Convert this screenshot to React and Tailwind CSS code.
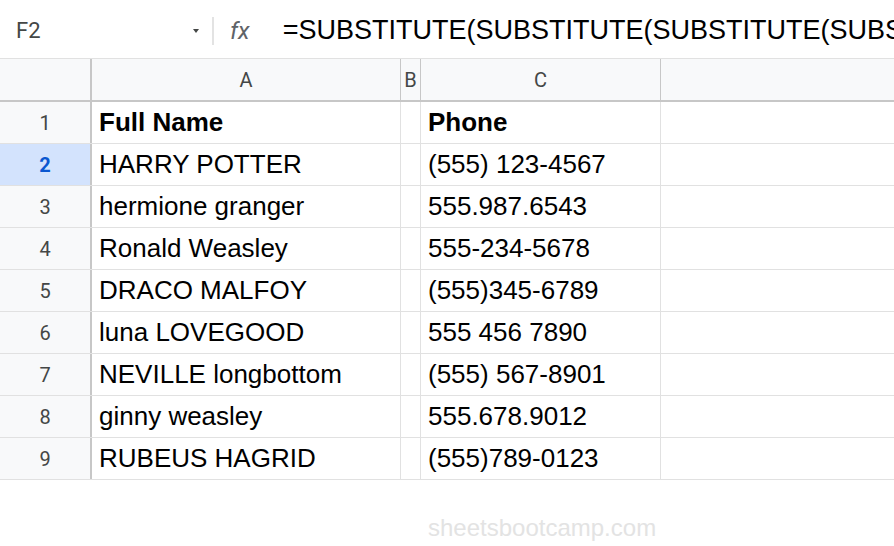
export default function App() {
  const rows = [
    ["Full Name", "Phone"],
    ["HARRY POTTER", "(555) 123-4567"],
    ["hermione granger", "555.987.6543"],
    ["Ronald Weasley", "555-234-5678"],
    ["DRACO MALFOY", "(555)345-6789"],
    ["luna LOVEGOOD", "555 456 7890"],
    ["NEVILLE longbottom", "(555) 567-8901"],
    ["ginny weasley", "555.678.9012"],
    ["RUBEUS HAGRID", "(555)789-0123"],
  ];

  return (
    <div className="w-[894px] h-[546px] bg-white overflow-hidden font-['Liberation_Sans',Arial,sans-serif] text-black">
      {/* formula bar */}
      <div className="flex items-center h-[59px] pt-[3px] border-b border-[#e1e1e1] overflow-hidden">
        <div className="flex items-center shrink-0 w-[212px] pl-[16px] pr-[13px]">
          <span className="font-['Roboto',sans-serif] text-[22px] text-[#444746]">F2</span>
          <svg className="ml-auto" width="6" height="4" viewBox="0 0 6 4">
            <path d="M0 0h6L3 4z" fill="#444746" />
          </svg>
        </div>
        <div className="shrink-0 w-[2px] h-[28px] bg-[#e3e3e3]" />
        <span className="shrink-0 ml-[16px] italic font-['Roboto',sans-serif] text-[24px] text-[#5f6368]">fx</span>
        <span className="shrink-0 ml-[33px] whitespace-nowrap text-[27px]">
          =SUBSTITUTE(SUBSTITUTE(SUBSTITUTE(SUBSTITUTE(A2,
        </span>
      </div>

      {/* column headers */}
      <div className="flex h-[43px] bg-[#f8f9fa] border-b-2 border-[#c7c7c7] font-['Roboto',sans-serif] text-[20px] text-[#444746]">
        <div className="w-[92px] shrink-0 border-r-2 border-[#c7c7c7]" />
        <div className="w-[309px] shrink-0 border-r border-[#c7c7c7] flex items-center justify-center">A</div>
        <div className="w-[20px] shrink-0 border-r border-[#c7c7c7] flex items-center justify-center">B</div>
        <div className="w-[240px] shrink-0 border-r border-[#c7c7c7] flex items-center justify-center">C</div>
        <div className="flex-1" />
      </div>

      {/* rows */}
      {rows.map((r, i) => {
        const selected = i === 1;
        const bold = i === 0;
        return (
          <div key={i} className="flex h-[42px] border-b border-[#e1e1e1]">
            <div
              className={
                selected
                  ? "w-[92px] shrink-0 border-r-2 border-[#c7c7c7] bg-[#d3e3fd] flex items-center justify-center font-['Roboto',sans-serif] text-[20px] font-bold text-[#0b57d0]"
                  : "w-[92px] shrink-0 border-r-2 border-[#c7c7c7] bg-[#f8f9fa] flex items-center justify-center font-['Roboto',sans-serif] text-[20px] text-[#444746]"
              }
            >
              {i + 1}
            </div>
            <div className={bold ? "w-[309px] shrink-0 border-r border-[#e1e1e1] flex items-center pl-[7px] text-[26px] font-bold" : "w-[309px] shrink-0 border-r border-[#e1e1e1] flex items-center pl-[7px] text-[26px]"}>
              {r[0]}
            </div>
            <div className="w-[20px] shrink-0 border-r border-[#e1e1e1]" />
            <div className={bold ? "w-[240px] shrink-0 border-r border-[#e1e1e1] flex items-center pl-[7px] text-[26px] font-bold" : "w-[240px] shrink-0 border-r border-[#e1e1e1] flex items-center pl-[7px] text-[26px]"}>
              {r[1]}
            </div>
            <div className="flex-1" />
          </div>
        );
      })}

      {/* watermark */}
      <div className="mt-[34px] pl-[428px] text-[24px] leading-[28px] text-[#e3e3e3]">sheetsbootcamp.com</div>
    </div>
  );
}
